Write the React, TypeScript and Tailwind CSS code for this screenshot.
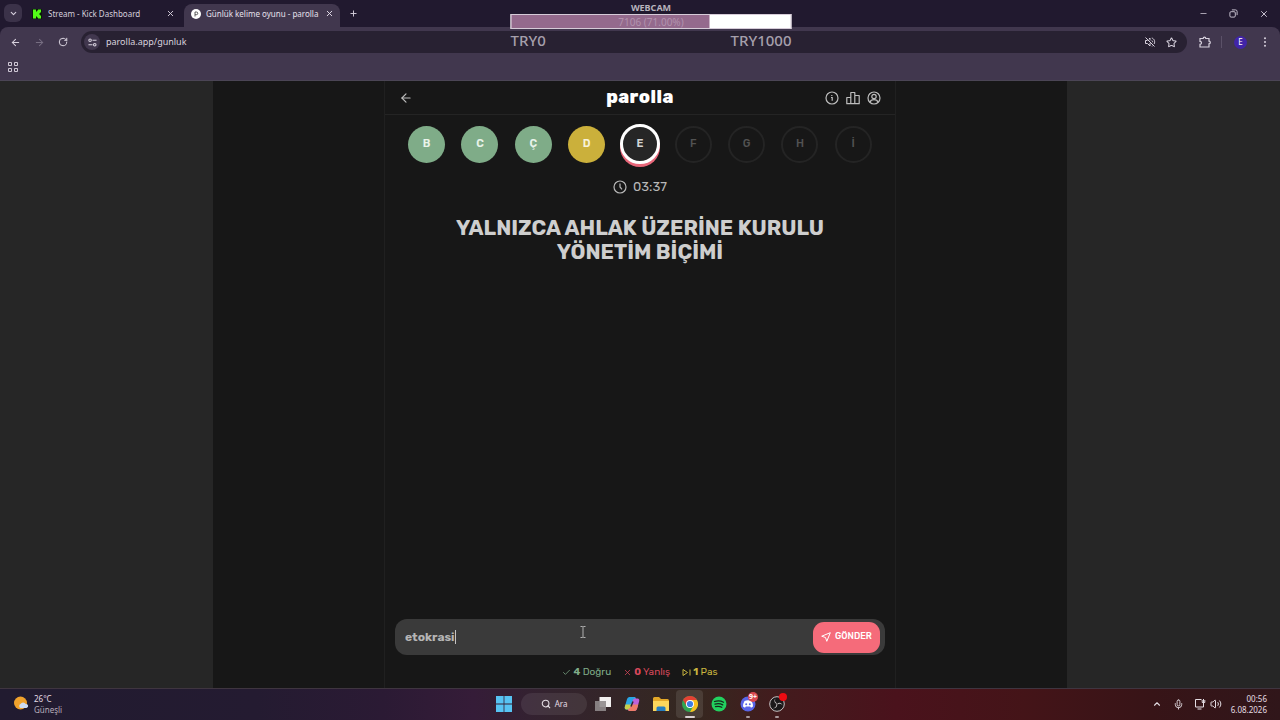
import { useState } from "react";
import type { ReactNode } from "react";
import {
  ArrowLeft,
  ArrowRight,
  Check,
  ChevronDown,
  ChevronUp,
  Mic,
  Minus,
  Plus,
  RotateCw,
  Search,
  Star,
  Volume2,
  X,
} from "lucide-react";

type Status = "correct" | "pass" | "current" | "idle";

const letters: { char: string; status: Status }[] = [
  { char: "B", status: "correct" },
  { char: "C", status: "correct" },
  { char: "Ç", status: "correct" },
  { char: "D", status: "pass" },
  { char: "E", status: "current" },
  { char: "F", status: "idle" },
  { char: "G", status: "idle" },
  { char: "H", status: "idle" },
  { char: "İ", status: "idle" },
];

const letterStyles: Record<Status, string> = {
  correct: "size-[37px] bg-[#7fac88] font-semibold text-[#e9f3ea]",
  pass: "size-[37px] bg-[#cbb03b] font-semibold text-[#f8f2d8]",
  current: "size-10 border-[3px] border-white bg-[#262626] font-semibold text-[#d4d4d4] shadow-[0_3px_0_#e8677a]",
  idle: "size-[37px] border-2 border-[#242424] font-medium text-[#525252]",
};

function IconButton({ label, className = "", children }: { label: string; className?: string; children: ReactNode }) {
  return (
    <button type="button" aria-label={label} className={`flex shrink-0 items-center justify-center ${className}`}>
      {children}
    </button>
  );
}

function KickLogo() {
  return (
    <svg viewBox="0 0 10 10" className="size-[10px] shrink-0" aria-hidden="true">
      <rect width="10" height="10" fill="#0c1a0b" />
      <path d="M1 .5h3v2h1v-1h1v-1h3v3H8v1H7v1h1v1h1v3H6v-1H5v-1H4v2H1z" fill="#53fc18" />
    </svg>
  );
}

function TabStrip() {
  return (
    <div className="flex h-[27px] items-end bg-[#21192f] pl-1 text-[#d5cfdc]">
      <IconButton label="Sekme ara" className="mb-[5px] h-[18px] w-[18px] rounded-md bg-[#3b3249]">
        <ChevronDown size={9} strokeWidth={3} />
      </IconButton>
      <div className="flex min-w-0 flex-1 items-end">
        <div className="ml-[10px] flex h-[27px] w-[152px] items-center">
          <KickLogo />
          <span className="ml-[6px] flex-1 truncate text-[8px]">Stream - Kick Dashboard</span>
          <IconButton label="Sekmeyi kapat" className="mr-[9px]">
            <X size={9} strokeWidth={2.5} />
          </IconButton>
        </div>
        <div className="flex h-[23px] w-[156px] items-center rounded-t-lg bg-[#41374e] pr-[6px] pb-1 pl-[7px] text-[#e6e0ec]">
          <svg viewBox="0 0 10 10" className="size-[10px] shrink-0" aria-hidden="true">
            <circle cx="5" cy="5" r="5" fill="#fff" />
            <path d="M4 7.500V3h1.400a1.300 1.300 0 0 1 0 2.700H4" fill="none" stroke="#4b4b4b" strokeWidth=".9" />
          </svg>
          <span className="ml-[5px] flex-1 text-[8px] whitespace-nowrap">Günlük kelime oyunu - parolla</span>
          <IconButton label="Sekmeyi kapat">
            <X size={9} strokeWidth={2.5} />
          </IconButton>
        </div>
        <IconButton label="Yeni sekme" className="mb-[9px] ml-[9px]">
          <Plus size={9} strokeWidth={2.5} />
        </IconButton>
      </div>
      <div className="flex h-[27px] items-center gap-[21px] pr-[11px]">
        <IconButton label="Simge durumuna küçült">
          <Minus size={9} strokeWidth={2} />
        </IconButton>
        <IconButton label="Önceki boyut">
          <svg viewBox="0 0 10 10" className="size-[9px]" fill="none" stroke="currentColor">
            <rect x="1" y="3" width="6" height="6" rx="1.3" />
            <path d="M3.2 1h4A1.8 1.8 0 0 1 9 2.800v4" />
          </svg>
        </IconButton>
        <IconButton label="Kapat">
          <X size={10} strokeWidth={2.2} />
        </IconButton>
      </div>
    </div>
  );
}

function Toolbar() {
  return (
    <div className="flex h-[30px] items-center rounded-t-lg pr-[9px] pl-[9px] text-[#d8d2de]">
      <IconButton label="Geri" className="w-3">
        <ArrowLeft size={11} strokeWidth={2.2} />
      </IconButton>
      <IconButton label="İleri" className="ml-3 w-3 text-[#776e82]">
        <ArrowRight size={11} strokeWidth={2.2} />
      </IconButton>
      <IconButton label="Yenile" className="ml-3 w-3">
        <RotateCw size={10} strokeWidth={2.4} />
      </IconButton>
      <div className="ml-3 flex h-[22px] min-w-0 flex-1 items-center rounded-full bg-[#282132] pr-[10px] pl-[3px]">
        <IconButton label="Site bilgileri" className="size-4 rounded-full bg-[#41374e]">
          <svg viewBox="0 0 10 10" className="size-[9px]" fill="none" stroke="currentColor" strokeWidth="1.2">
            <circle cx="2.300" cy="2.500" r="1.400" />
            <path d="M5 2.500h4.500M.5 7.500H5" />
            <circle cx="7.500" cy="7.500" r="1.400" />
          </svg>
        </IconButton>
        <input
          aria-label="Adres çubuğu"
          defaultValue="parolla.app/gunluk"
          className="ml-[6px] min-w-0 flex-1 bg-transparent text-[9px] outline-none"
        />
        <IconButton label="Sesi kapalı">
          <svg viewBox="0 0 12 12" className="size-3" fill="none" stroke="currentColor" aria-hidden="true">
            <path d="M1.500 1.500l9 9M3.500 4.500h-2v3h2l2.500 2.500V7M4.800 3.200 6 2v2.400M7.800 4.500c.6.500.8 1 .7 1.700M7.800 2c2.500.8 3.600 3.600 2.300 6M8.500 10l-.7.300" />
          </svg>
        </IconButton>
        <IconButton label="Yer işareti ekle" className="ml-[10px]">
          <Star size={11} strokeWidth={2.200} />
        </IconButton>
      </div>
      <IconButton label="Uzantılar" className="ml-3">
        <svg viewBox="0 0 12 12" className="size-3" fill="none" stroke="currentColor" strokeWidth="1.200">
          <path d="M1 2.500h3.200a1.300 1.300 0 0 1 2.600 0H10v2.700a1.300 1.300 0 0 1 0 2.600V11H1V8.300a1.500 1.500 0 0 0 0-3z" />
        </svg>
      </IconButton>
      <span className="ml-[10px] h-3 w-px bg-[#5b5168]" />
      <IconButton label="Profil" className="ml-3 size-[13px] rounded-full bg-[#4125a8] text-[8px] text-white">
        E
      </IconButton>
      <IconButton label="Menü" className="ml-3 w-3">
        <svg viewBox="0 0 10 10" className="size-[10px]" fill="currentColor">
          <circle cx="5" cy="1.300" r="1" />
          <circle cx="5" cy="5" r="1" />
          <circle cx="5" cy="8.700" r="1" />
        </svg>
      </IconButton>
    </div>
  );
}

function GoalOverlay() {
  return (
    <div className="pointer-events-none absolute top-0 left-1/2 ml-[11px] w-[281px] -translate-x-1/2 font-['Comic_Sans_MS','Noto_Sans',sans-serif] text-[#a59fab]">
      <div className="h-[14px] text-center text-[9px] leading-4 font-bold text-[#b8b3bd]">WEBCAM</div>
      <div className="relative h-[15px] border border-[#d6cbd8] bg-white">
        <div className="h-full w-[71%] bg-[#946a8d]" />
        <div className="absolute inset-0 text-center text-[10px] leading-[14px] text-[#b292ad]">7106 (71.00%)</div>
      </div>
      <div className="flex justify-between text-[15px] leading-[22px] font-medium">
        <span>TRY0</span>
        <span>TRY1000</span>
      </div>
    </div>
  );
}

function Header() {
  return (
    <header className="grid h-[34px] grid-cols-3 items-center border-b border-[#242424] px-[14px] text-[#bdbdbd]">
      <IconButton label="Geri" className="justify-self-start">
        <ArrowLeft size={14} strokeWidth={2} />
      </IconButton>
      <h1 className="justify-self-center pb-[2px] text-[18px] leading-6 font-extrabold tracking-wide text-white">
        parolla
      </h1>
      <div className="flex gap-[7px] justify-self-end">
        <IconButton label="Bilgi">
          <svg viewBox="0 0 14 14" className="size-[14px]" fill="none" stroke="currentColor" strokeWidth="1.200">
            <circle cx="7" cy="7" r="6" />
            <path d="M6 6.500h1.200v3.300M6.800 4v1" />
          </svg>
        </IconButton>
        <IconButton label="İstatistikler">
          <svg viewBox="0 0 14 14" className="size-[14px]" fill="none" stroke="currentColor" strokeWidth="1.200" strokeLinejoin="round">
            <path d="M.8 6.500h4v6.200h-4zM4.800 1.500h4v11.200h-4zM8.800 4.500h4.400v8.200H8.800z" />
          </svg>
        </IconButton>
        <IconButton label="Profil">
          <svg viewBox="0 0 14 14" className="size-[14px]" fill="none" stroke="currentColor" strokeWidth="1.200">
            <circle cx="7" cy="7" r="6" />
            <circle cx="7" cy="5.500" r="2.200" />
            <path d="M3 11.300c.5-2 1.700-2.700 4-2.700s3.500.7 4 2.700" />
          </svg>
        </IconButton>
      </div>
    </header>
  );
}

function Game() {
  const [answer, setAnswer] = useState("etokrasi");
  return (
    <section className="flex w-full max-w-lg flex-col border-x border-[#202020] font-['Rubik','Inter',sans-serif]">
      <Header />
      <ol className="flex h-[58px] items-center px-[15px]">
        {letters.map(({ char, status }) => (
          <li key={char} className="flex flex-1 justify-center">
            <span
              className={`flex shrink-0 items-center justify-center rounded-full pt-px text-[11px] ${letterStyles[status]}`}
            >
              {char}
            </span>
          </li>
        ))}
      </ol>
      <div className="flex h-7 items-center justify-center gap-[6px] text-[13px] text-[#b8b8b8]">
        <svg viewBox="0 0 14 14" className="size-[14px]" fill="none" stroke="currentColor" strokeWidth="1.200" aria-hidden="true">
          <circle cx="7" cy="7" r="6" />
          <path d="M7 3.500V7l2 2.300" />
        </svg>
        <time>03:37</time>
      </div>
      <h2 className="mt-[15px] px-14 text-center text-[21px] leading-6 font-bold text-[#cecece]">
        YALNIZCA AHLAK ÜZERİNE KURULU YÖNETİM BİÇİMİ
      </h2>
      <form
        className="mx-[10px] mt-auto flex h-9 items-center rounded-xl bg-[#3a3a3a] pr-[5px] pl-[10px]"
        onSubmit={(event) => event.preventDefault()}
      >
        <label className="flex flex-1 cursor-text items-center">
          <input
            aria-label="Cevap"
            value={answer}
            onChange={(event) => setAnswer(event.target.value)}
            className="field-sizing-content bg-transparent text-[12px] font-bold text-[#b5b5b5] outline-none"
          />
          <span className="h-[14px] w-px bg-[#c4c4c4]" />
        </label>
        <button
          type="submit"
          className="flex h-[31px] w-[67px] items-center justify-center gap-1 rounded-[11px] bg-[#f56b7a] text-[9px] font-medium text-white"
        >
          <svg viewBox="0 0 10 10" className="size-[10px]" fill="none" stroke="currentColor" strokeLinejoin="round" aria-hidden="true">
            <path d="M9.300.700L.700 4.200l3.800 1.300 1.300 3.800z" />
          </svg>
          GÖNDER
        </button>
      </form>
      <div className="flex h-[33px] items-center justify-center gap-3 pt-px text-[10px]">
        <span className="flex items-center gap-[2px] text-[#7fac88]">
          <Check size={9} />
          <span>
            <b>4</b> Doğru
          </span>
        </span>
        <span className="flex items-center gap-[2px] text-[#d8485b]">
          <X size={9} />
          <span>
            <b>0</b> Yanlış
          </span>
        </span>
        <span className="flex items-center gap-[2px] text-[#c9b53f]">
          <svg viewBox="0 0 9 9" className="size-[9px]" fill="none" stroke="currentColor" aria-hidden="true">
            <path d="M1 1.500v6l4.500-3zM8 1.500v6" />
          </svg>
          <span>
            <b>1</b> Pas
          </span>
        </span>
      </div>
    </section>
  );
}

function TaskItem({ label, active = false, running = false, children }: { label: string; active?: boolean; running?: boolean; children: ReactNode }) {
  return (
    <button
      type="button"
      aria-label={label}
      className={`relative flex h-7 w-[27px] items-center justify-center rounded ${active ? "bg-white/10" : ""}`}
    >
      {children}
      {active && <span className="absolute bottom-0 h-[2px] w-[10px] rounded bg-[#d9cfd0]" />}
      {running && <span className="absolute bottom-0 h-[2px] w-1 rounded bg-[#a99a9c]" />}
    </button>
  );
}

function Taskbar() {
  return (
    <footer className="grid h-8 grid-cols-[1fr_auto_1fr] items-center border-t border-[#3f3540] bg-[linear-gradient(90deg,#211b30_0%,#241b31_20%,#2b1a34_30%,#351c38_37%,#33232e_43%,#352820_54%,#431b1d_61%,#4a121c_70%,#441418_80%,#371417_90%,#30161a_100%)] pb-px text-[8px] text-[#e4dde3]">
      <div className="flex items-center gap-[5px] pl-[13px] leading-[11px]">
        <svg viewBox="0 0 16 16" className="size-4" aria-hidden="true">
          <circle cx="7.500" cy="7" r="6.500" fill="#f0a22c" />
          <path d="M7.500 12a2.200 2.200 0 0 1 0-4 3 3 0 0 1 5.200 0 2 2 0 0 1 .8 4z" fill="#cfdcf3" />
        </svg>
        <div>
          <div>26°C</div>
          <div className="text-[#b7adba]">Güneşli</div>
        </div>
      </div>
      <div className="flex items-center gap-[2px]">
        <TaskItem label="Başlat">
          <svg viewBox="0 0 16 16" className="size-4" fill="#57c3f3">
            <path d="M0 0h7.600v7.600H0zM8.400 0H16v7.600H8.400zM0 8.400h7.600V16H0zM8.400 8.400H16V16H8.400z" />
          </svg>
        </TaskItem>
        <button type="button" className="ml-[2px] flex h-[22px] w-[66px] items-center justify-center gap-1 rounded-full bg-white/8">
          <Search size={10} strokeWidth={2.600} />
          Ara
        </button>
        <TaskItem label="Görev görünümü">
          <svg viewBox="0 0 16 16" className="size-4">
            <path d="M4.500 1H16v10H4.500z" fill="#f1efef" />
            <path d="M0 5h11v10H0z" fill="#8f898b" opacity=".9" />
          </svg>
        </TaskItem>
        <TaskItem label="Copilot">
          <svg viewBox="0 0 16 16" className="size-4">
            <path d="M5.500 1h4.800c1 0 1.500.6 1.800 1.500L10 4 7 12c-.4 1-1 1.500-2 1.500H2.500C.8 13.500.4 12 .9 10.500l2-7C3.400 2 4.200 1 5.500 1z" fill="#2aa5e4" />
            <path d="M1.500 8.500h6.700L7 12c-.4 1-1 1.500-2 1.500H2.500C.8 13.500.4 12 .9 10.500z" fill="#c8cf4b" />
            <path d="M10.500 15H5.700c-1 0-1.500-.6-1.800-1.500L6 12l3-8c.4-1 1-1.500 2-1.500h2.500c1.700 0 2.100 1.500 1.600 3l-2 7c-.5 1.500-1.300 2.500-2.600 2.500z" fill="#bd62db" />
            <path d="M14.300 8.500H7.600L6 12l-2.100 1.500c.3.900.8 1.500 1.800 1.500h4.800c1.300 0 2.100-1 2.600-2.500z" fill="#ee7c68" />
            <path d="M9 5.500 7 10.500" stroke="#312631" strokeWidth="1.500" />
          </svg>
        </TaskItem>
        <TaskItem label="Dosya Gezgini">
          <svg viewBox="0 0 16 16" className="size-4">
            <path d="M0 2.500Q0 1 1.500 1H6l2 2h6.500Q16 3 16 4.500V15H0z" fill="#e4a828" />
            <path d="M0 5h16v10H0z" fill="#fbd65c" />
            <path d="M3.500 15v-3q0-1.500 1.500-1.500h6q1.500 0 1.500 1.500v3z" fill="#237dc1" />
          </svg>
        </TaskItem>
        <TaskItem label="Chrome" active>
          <svg viewBox="0 0 16 16" className="size-4">
            <circle cx="8" cy="8" r="8" fill="#31a551" />
            <path d="M8 8 1.070 4A8 8 0 0 1 14.930 4z" fill="#e34133" />
            <path d="M8 4h6.930A8 8 0 0 1 8 16l3.460-6z" fill="#f9bf1e" />
            <path d="M1.070 4 4.540 10 8 8V4z" fill="#e34133" />
            <circle cx="8" cy="8" r="4" fill="#fff" />
            <circle cx="8" cy="8" r="3.100" fill="#3e7de4" />
          </svg>
        </TaskItem>
        <TaskItem label="Spotify">
          <svg viewBox="0 0 16 16" className="size-4">
            <circle cx="8" cy="8" r="7.500" fill="#22d15f" />
            <path d="M3.500 5.500c3-1 6.500-.7 9 .7M4 8.200c2.700-.8 5.500-.5 7.700.7M4.500 10.700c2.300-.6 4.500-.4 6.300.6" fill="none" stroke="#152a1b" strokeWidth="1.300" strokeLinecap="round" />
          </svg>
        </TaskItem>
        <TaskItem label="Discord" running>
          <svg viewBox="0 0 16 16" className="size-4">
            <circle cx="8" cy="8" r="7.500" fill="#5965e8" />
            <path d="M4.500 5Q8 3.700 11.500 5q1.500 2.500 1.500 5.500l-2 1.200-.8-1.200H5.800L5 11.700l-2-1.200Q3 7.500 4.500 5z" fill="#fff" />
            <circle cx="6.200" cy="8.200" r="1" fill="#5965e8" />
            <circle cx="9.800" cy="8.200" r="1" fill="#5965e8" />
          </svg>
          <span className="absolute top-[2px] right-[3px] flex size-[10px] items-center justify-center rounded-full bg-[#d94850] text-[7px] font-bold text-white">
            9+
          </span>
        </TaskItem>
        <TaskItem label="OBS Studio" running>
          <svg viewBox="0 0 16 16" className="size-4">
            <circle cx="8" cy="8" r="7.300" fill="#1b181a" stroke="#c8c3c4" />
            <g fill="#c8c3c4">
              <path d="M6.500 2.500a3.200 3.200 0 0 0 .7 5.300l1.300-.6a3 3 0 0 1-2-4.700z" />
              <path d="M6.500 2.500a3.200 3.200 0 0 0 .7 5.300l1.300-.6a3 3 0 0 1-2-4.700z" transform="rotate(120 8 8)" />
              <path d="M6.500 2.500a3.200 3.200 0 0 0 .7 5.300l1.300-.6a3 3 0 0 1-2-4.700z" transform="rotate(240 8 8)" />
            </g>
          </svg>
          <span className="absolute top-[3px] right-[3px] size-[8px] rounded-full bg-[#ee0b12]" />
        </TaskItem>
      </div>
      <div className="flex items-center justify-end pr-[13px]">
        <IconButton label="Gizli simgeler">
          <ChevronUp size={10} strokeWidth={2.600} />
        </IconButton>
        <IconButton label="Mikrofon" className="ml-[11px]">
          <Mic size={11} />
        </IconButton>
        <IconButton label="Ağ" className="ml-[10px]">
          <svg viewBox="0 0 12 12" className="size-3" fill="none" stroke="currentColor">
            <path d="M7.500 1.500h-6v7.500h8V6M3.500 11h4M9.500 1v5M8.200 2v2.500h2.600V2" />
          </svg>
        </IconButton>
        <IconButton label="Ses" className="ml-1">
          <Volume2 size={12} />
        </IconButton>
        <div className="ml-[9px] text-right leading-[11px]">
          <div>00:56</div>
          <div>6.08.2026</div>
        </div>
      </div>
    </footer>
  );
}

export default function App() {
  return (
    <div className="relative flex min-h-screen flex-col bg-[#262626] font-['Segoe_UI','Noto_Sans',sans-serif]">
      <div className="bg-[#21192f]">
        <TabStrip />
        <div className="rounded-t-lg border-b border-[#4b4555] bg-[#41374e]">
          <Toolbar />
          <div className="flex h-[23px] items-start pt-[5px] pl-2 text-[#cfc8d5]">
            <IconButton label="Uygulamalar">
              <svg viewBox="0 0 10 10" className="size-[10px]" fill="none" stroke="currentColor">
                <path d="M.5.500h3v3h-3zM6.500.500h3v3h-3zM.5 6.500h3v3h-3zM6.500 6.500h3v3h-3z" />
              </svg>
            </IconButton>
          </div>
        </div>
      </div>
      <GoalOverlay />
      <main className="mx-auto flex w-2/3 flex-1 justify-center bg-[#171717]">
        <Game />
      </main>
      <svg viewBox="0 0 6 12" className="pointer-events-none absolute top-[626px] left-[580px] h-3 w-[6px]" fill="none" stroke="#b0b0b0" aria-hidden="true">
        <path d="M.500.500H2.500L3 1l.500-.500h2M3 1v10M.500 11.500H2.500L3 11l.500.500h2" />
      </svg>
      <Taskbar />
    </div>
  );
}
